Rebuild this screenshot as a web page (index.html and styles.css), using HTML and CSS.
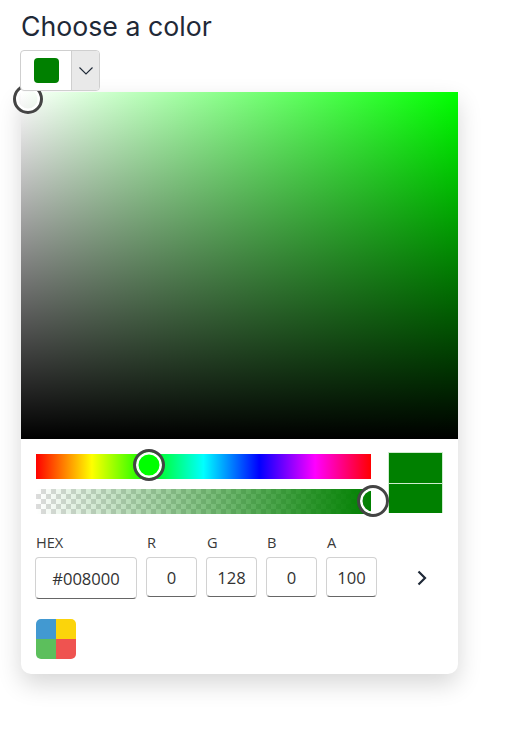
FILE: index.html
```html
<!DOCTYPE html>
<html lang="en">
<head>
<meta charset="utf-8">
<title>Choose a color</title>
<link rel="stylesheet" href="styles.css">
</head>
<body>
<main class="page">
  <h1 class="title">Choose a color</h1>
  <div class="picker-button">
    <span class="button-main"><span class="button-swatch"></span></span>
    <span class="button-caret">
      <svg width="16" height="16" viewBox="0 0 16 16" fill="none" stroke="#1f2937" stroke-width="1.100"><path d="M1.500 4.500 8 11l6.500-6.500"/></svg>
    </span>
  </div>
  <section class="panel">
    <div class="canvas"><span class="thumb thumb-canvas"></span></div>
    <div class="controls">
      <div class="slider-row">
        <div class="sliders">
          <div class="slider hue"><span class="thumb thumb-hue"></span></div>
          <div class="slider alpha"><span class="thumb thumb-alpha"></span></div>
        </div>
        <div class="preview"><span class="preview-part"></span><span class="preview-part"></span></div>
      </div>
      <div class="fields">
        <div class="field field-hex"><span class="field-label">HEX</span><span class="field-box">#008000</span></div>
        <div class="field"><span class="field-label">R</span><span class="field-box">0</span></div>
        <div class="field"><span class="field-label">G</span><span class="field-box">128</span></div>
        <div class="field"><span class="field-label">B</span><span class="field-box">0</span></div>
        <div class="field"><span class="field-label">A</span><span class="field-box">100</span></div>
        <span class="more">
          <svg width="16" height="16" viewBox="0 0 16 16" fill="none" stroke="#1f2937" stroke-width="2.200"><path d="M3.500 1.500 10 8l-6.500 6.500"/></svg>
        </span>
      </div>
      <div class="palette">
        <span class="blue"></span><span class="yellow"></span><span class="green"></span><span class="red"></span>
      </div>
    </div>
  </section>
</main>
</body>
</html>
```
FILE: styles.css
```css
* { box-sizing: border-box; }
html, body { margin: 0; background: #fff; }
body { font-family: "Open Sans", "Noto Sans", sans-serif; color: #333; }
.page { padding: 9px 0 0 21px; width: 513px; height: 743px; overflow: hidden; }
.title {
  margin: 0 0 7px;
  font: 400 26.700px/34px Inter, sans-serif;
  color: #1f2937;
}
.picker-button {
  position: relative;
  z-index: 2;
  display: flex;
  width: 80px;
  height: 41px;
  margin-left: -1px;
  background: #fff;
  border: 1px solid #cfcfcf;
  border-radius: 4px;
}
.button-main { flex: 1; display: flex; align-items: center; justify-content: center; padding-left: 1px; }
.button-swatch { width: 25px; height: 25px; border-radius: 4px; background: #008000; }
.button-caret {
  width: 28px;
  display: flex;
  align-items: center;
  justify-content: center;
  background: #e9e9e9;
  border-left: 1px solid #cfcfcf;
  border-radius: 0 3px 3px 0;
}
.panel {
  width: 437px;
  height: 582px;
  margin-top: 1px;
  background: #fff;
  border-radius: 0 0 10px 10px;
  box-shadow: 0 10px 25px rgba(0, 0, 0, .16);
}
.canvas {
  position: relative;
  height: 347px;
  background:
    linear-gradient(to bottom, rgba(0, 0, 0, 0), #000),
    linear-gradient(to right, #fff, #0f0);
}
.thumb {
  position: absolute;
  width: 32px;
  height: 32px;
  border-radius: 50%;
  border: 3px solid #444;
  box-shadow: inset 0 0 0 2.500px #fff;
}
.thumb-canvas { left: -8px; top: -8px; width: 30px; height: 30px; }
.controls { padding: 13px 15px 0; }
.slider-row { display: flex; gap: 17px; }
.sliders { display: flex; flex-direction: column; gap: 10px; padding-top: 2px; }
.slider { position: relative; width: 335px; height: 25px; }
.hue {
  background: linear-gradient(to right, #f00 0%, #ff0 16.66%, #0f0 33.33%, #0ff 50%, #00f 66.66%, #f0f 83.33%, #f00 100%);
}
.thumb-hue { left: 97px; top: -5px; background: #0f0; }
.alpha {
  background:
    linear-gradient(to right, rgba(0, 128, 0, 0), #008000),
    repeating-conic-gradient(#dcdcdc 0 25%, #fff 0 50%) 0 0 / 10px 10px;
}
.thumb-alpha { left: 321px; top: -4px; background: transparent; }
.preview {
  width: 55px;
  height: 61px;
  display: flex;
  flex-direction: column;
  gap: 1px;
  padding: 1px 1px 0;
  background: #cfeccf;
}
.preview-part { flex: 1; background: #008000; }
.fields { display: flex; gap: 9px; margin-top: 19px; align-items: flex-start; }
.field { width: 51px; display: flex; flex-direction: column; gap: 5px; }
.field-hex { width: 102px; margin-left: -1px; }
.field-label { font-size: 14.600px; line-height: 19px; padding-left: 1px; color: #3a3a3a; }
.field-box {
  height: 40px;
  display: flex;
  align-items: center;
  justify-content: center;
  font-size: 16.600px;
  color: #333;
  border: 1px solid #d2d2d2;
  border-bottom-color: #666;
  border-radius: 4px;
}
.field-hex .field-box { height: 42px; }
.more { margin: 37px 0 0 29px; display: flex; }
.palette {
  display: grid;
  grid-template-columns: 20px 20px;
  grid-auto-rows: 20px;
  width: 40px;
  margin: 20px 0 0;
  border-radius: 5px;
  overflow: hidden;
}
.blue { background: #4299d1; }
.yellow { background: #fbd40b; }
.green { background: #5cbf5c; }
.red { background: #ef5350; }
```
